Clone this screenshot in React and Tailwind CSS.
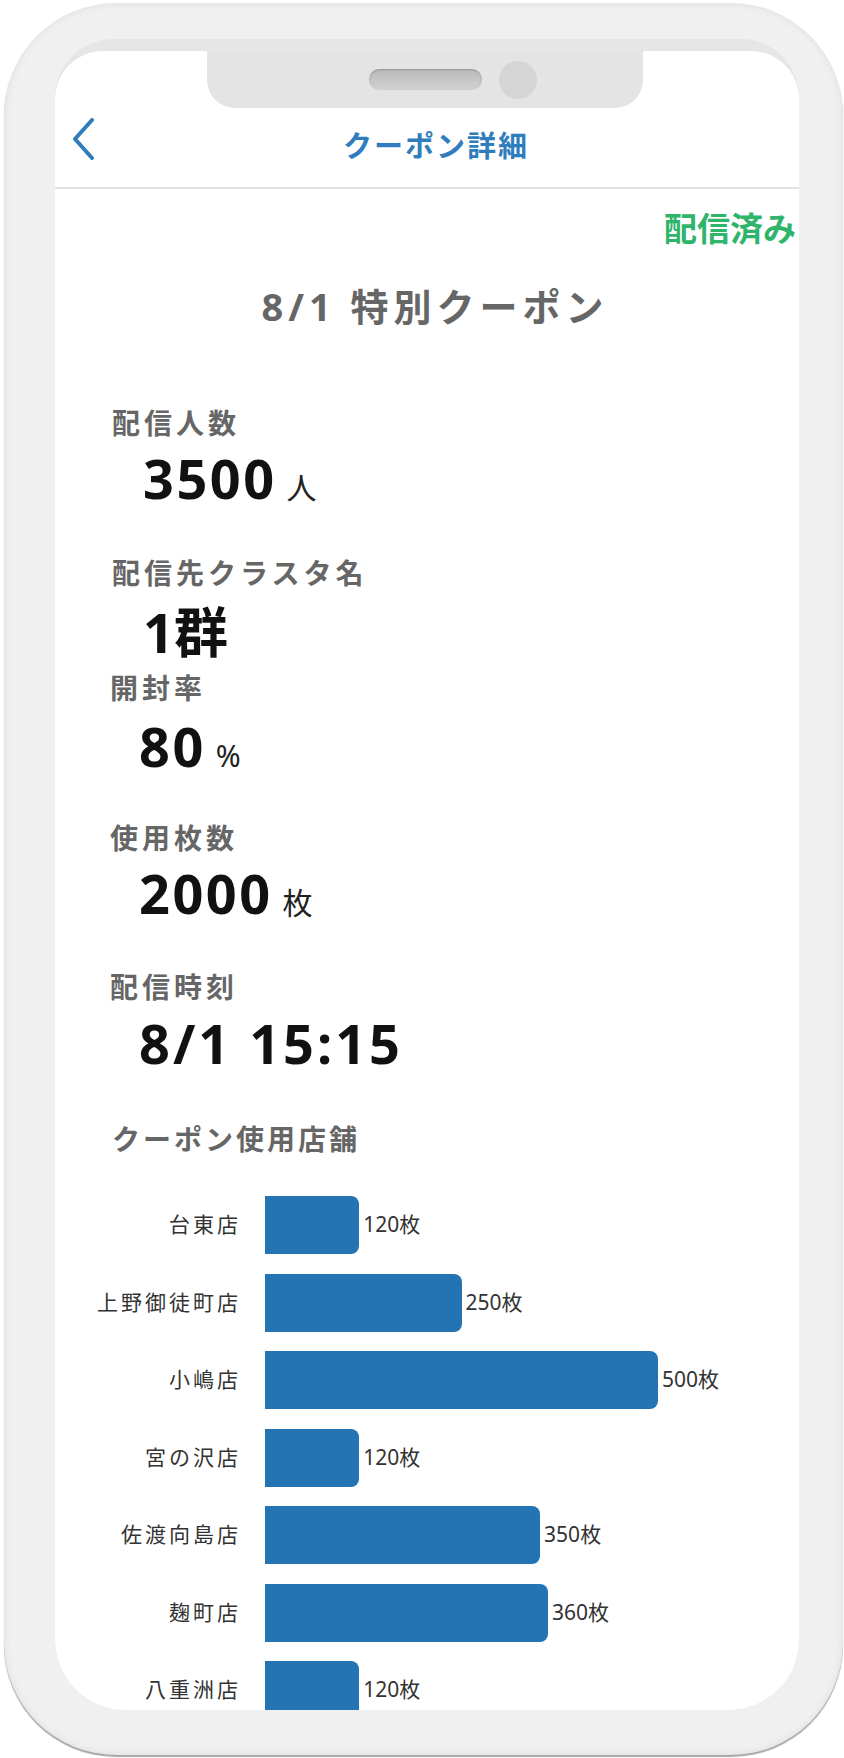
const stores = [
  { name: '台東店', count: 120 },
  { name: '上野御徒町店', count: 250 },
  { name: '小嶋店', count: 500 },
  { name: '宮の沢店', count: 120 },
  { name: '佐渡向島店', count: 350 },
  { name: '麹町店', count: 360 },
  { name: '八重洲店', count: 120 },
];

const MAX = 500;
const BAR_MAX = 393;

const Label = ({ children, className = '' }) => (
  <div className={`h-[32px] text-[28px] leading-[32px] font-bold text-[#666] ${className}`}>
    {children}
  </div>
);

const Value = ({ value, unit, className = '' }) => (
  <div className={`flex h-[60px] items-baseline leading-[60px] text-[#111] ${className}`}>
    <span className="text-[54px] tracking-[2.5px] font-bold">{value}</span>
    {unit && <span className="ml-[10px] text-[30px] leading-none text-[#222]">{unit}</span>}
  </div>
);

const StoreChart = () => (
  <div className="mt-[41px] flex flex-col gap-[19.5px]">
    {stores.map((s) => (
      <div key={s.name} className="flex h-[58px] shrink-0 items-center">
        <div className="w-[186px] text-right text-[21px] tracking-[3px] text-[#333]">{s.name}</div>
        <div
          className="ml-[24px] h-full rounded-r-[8px] bg-[#2474b4]"
          style={{ width: `${(s.count / MAX) * BAR_MAX}px` }}
        />
        <div className="ml-[4px] text-[21px] text-[#333]">{s.count}枚</div>
      </div>
    ))}
  </div>
);

export default function App() {
  return (
    <div className="min-h-screen bg-white font-['Noto_Sans','Noto_Sans_CJK_JP',sans-serif]">
      <div className="ml-[4px] pt-[3px]">
        <div className="w-[839px] h-[1752px] rounded-[112px] bg-[#f0f0f0] pt-[36px] pl-[51px] pr-[44px] pb-[45px] shadow-[inset_0_0_8px_rgba(0,0,0,0.08),0_2px_1px_rgba(0,0,0,0.35)]">
          <div className="h-full rounded-t-[58px] rounded-b-[70px] bg-[#e6e6e6] pt-[12px] overflow-hidden">
            <div className="relative h-full rounded-t-[48px] rounded-b-[70px] bg-white overflow-hidden">
              {/* notch */}
              <div className="absolute left-[152px] top-0 z-10 flex h-[57px] w-[436px] items-center gap-[17px] rounded-b-[28px] bg-[#e4e4e4] pl-[162px]">
                <div className="h-[21px] w-[113px] rounded-full bg-gradient-to-b from-[#b9b9b9] to-[#d2d2d2] shadow-[inset_0_1px_2px_rgba(0,0,0,0.2)]" />
                <div className="h-[38px] w-[38px] rounded-full bg-[#d5d5d5]" />
              </div>

              {/* header */}
              <div className="relative flex h-[138px] items-end justify-center border-b-2 border-[#e3e3e3] pb-[23px] pl-[18px]">
                <svg className="absolute left-[17px] top-[67px]" width="24" height="42" viewBox="0 0 24 42" fill="none">
                  <path d="M20 2 L3 21 L20 40" stroke="#2f7dbd" strokeWidth="4" strokeLinecap="round" strokeLinejoin="round" />
                </svg>
                <h1 className="text-[29px] leading-[36px] tracking-[2px] font-bold text-[#2f7dbd]">クーポン詳細</h1>
              </div>

              <div className="pt-[20px] pr-[3px] text-right text-[33px] leading-[40px] font-bold text-[#2fb46b]">
                配信済み
              </div>

              <div className="mt-[33px] h-[48px] pl-[16px] text-center text-[38px] leading-[48px] tracking-[5px] font-bold text-[#666]">
                8/1 特別クーポン
              </div>

              <Label className="mt-[77px] pl-[57px] tracking-[4px]">配信人数</Label>
              <Value className="mt-[9px] pl-[88px]" value="3500" unit="人" />

              <Label className="mt-[49px] pl-[57px] tracking-[4px]">配信先クラスタ名</Label>
              <div className="mt-[13px] h-[60px] pl-[88px] text-[54px] leading-[60px] font-bold text-[#111]">1群</div>

              <Label className="mt-[10px] pl-[55px] tracking-[4px]">開封率</Label>
              <Value className="mt-[12px] pl-[84px]" value="80" unit="%" />

              <Label className="mt-[46px] pl-[55px] tracking-[4px]">使用枚数</Label>
              <Value className="mt-[9px] pl-[84px]" value="2000" unit="枚" />

              <Label className="mt-[48px] pl-[55px] tracking-[4px]">配信時刻</Label>
              <div className="mt-[10px] h-[60px] pl-[84px] text-[54px] leading-[60px] tracking-[3px] font-bold text-[#111]">
                8/1 15:15
              </div>

              <Label className="mt-[50px] pl-[57px] tracking-[3px]">クーポン使用店舗</Label>
              <StoreChart />
            </div>
          </div>
        </div>
      </div>
    </div>
  );
}
